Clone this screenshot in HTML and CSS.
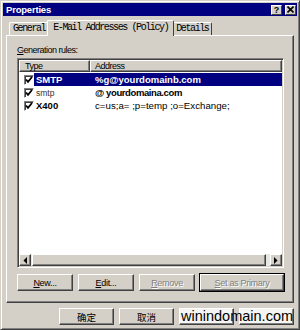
FILE: index.html
```html
<!DOCTYPE html>
<html lang="en">
<head>
    <meta charset="UTF-8">
    <title>Properties</title>

    <link rel="stylesheet" href="styles.css">
</head>
<body>
<div class="window">
    <div class="titlebar">
        <span class="title">Properties</span>
        <span class="capbtn help">?</span>
        <span class="capbtn close">
            <svg width="7" height="7" viewBox="0 0 7 7"><path d="M0.5 0.5 L6.5 6.5 M6.5 0.5 L0.5 6.5" stroke="#000" stroke-width="1.6"/></svg>
        </span>
    </div>

    <div class="tabs">
        <div class="tab">General</div>
        <div class="tab active">E-Mail Addresses (Policy)</div>
        <div class="tab">Details</div>
    </div>

    <div class="panel">
        <div class="label"><u>G</u>eneration rules:</div>
        <div class="list">
            <div class="head">
                <div class="hcell type">Type</div>
                <div class="hcell addr">Address</div>
            </div>
            <div class="rows">
                <div class="row">
                    <span class="check"><svg width="8" height="8" viewBox="0 0 8 8"><path d="M1 3.5 L3 5.8 L7 1" fill="none" stroke="#000" stroke-width="1.8"/></svg></span>
                    <div class="cells sel">
                        <span class="ctype bold">SMTP</span>
                        <span class="caddr bold">%g@yourdomainb.com</span>
                    </div>
                </div>
                <div class="row">
                    <span class="check"><svg width="8" height="8" viewBox="0 0 8 8"><path d="M1 3.5 L3 5.8 L7 1" fill="none" stroke="#000" stroke-width="1.8"/></svg></span>
                    <div class="cells">
                        <span class="ctype small">smtp</span>
                        <span class="caddr bold big">@ yourdomaina.com</span>
                    </div>
                </div>
                <div class="row">
                    <span class="check"><svg width="8" height="8" viewBox="0 0 8 8"><path d="M1 3.5 L3 5.8 L7 1" fill="none" stroke="#000" stroke-width="1.8"/></svg></span>
                    <div class="cells">
                        <span class="ctype bold">X400</span>
                        <span class="caddr plain">c=us;a= ;p=temp ;o=Exchange;</span>
                    </div>
                </div>
            </div>
            <div class="hscroll">
                <span class="sbtn"><svg width="4" height="7" viewBox="0 0 4 7"><polygon points="4,0 4,7 0.5,3.5" fill="#000"/></svg></span>
                <span class="thumb"></span>
                <span class="sbtn"><svg width="4" height="7" viewBox="0 0 4 7"><polygon points="0,0 0,7 3.5,3.5" fill="#000"/></svg></span>
            </div>
        </div>
        <div class="actions">
            <span class="btn"><u>N</u>ew...</span>
            <span class="btn"><u>E</u>dit...</span>
            <span class="btn off"><u>R</u>emove</span>
            <span class="btn off wide"><u>S</u>et as Primary</span>
        </div>
    </div>

    <div class="footer">
        <span class="btn cjk">确定</span>
        <span class="btn cjk">取消</span>
        <span class="btn pale"></span>
        <span class="btn pale"></span>
        <span class="watermark">winindomain.com</span>
    </div>
</div>
</body>
</html>
```

FILE: styles.css
```css
* {box-sizing:border-box}
body {margin:0; font-family:"Liberation Sans", Arial, sans-serif; font-size:9px}
u {text-decoration:underline}

.window {
    width:300px;
    height:330px;
    background:#d4d0c8;
    border:1px solid;
    border-color:#d4d0c8 #404040 #404040 #d4d0c8;
    box-shadow:inset 1px 1px #fff, inset -1px -1px #808080;
    padding:2px;
}

.titlebar {
    height:13px;
    background:#000080;
    display:flex;
    align-items:center;
    padding:0 1px 0 3px;
}
.title {
    color:#fff;
    font-weight:bold;
    font-size:9.5px;
    letter-spacing:-0.2px;
    flex:1;
}
.capbtn {
    width:11px;
    height:10px;
    background:#d4d0c8;
    border:1px solid;
    border-color:#fff #404040 #404040 #fff;
    display:flex;
    align-items:center;
    justify-content:center;
    font-weight:bold;
    font-size:9px;
    line-height:8px;
}
.help {margin-right:3px}

.tabs {
    display:flex;
    align-items:flex-end;
    height:15px;
    margin:4px 0 0 6px;
    position:relative;
    z-index:1;
}
.tab {
    height:13px;
    padding:0 3px;
    border:1px solid;
    border-color:#fff #404040 transparent #fff;
    border-bottom:0;
    border-radius:2px 2px 0 0;
    font-family:"Liberation Mono", monospace;
    font-size:10px;
    letter-spacing:-1.4px;
    line-height:12px;
    background:#d4d0c8;
}
.tab.active {
    height:16px;
    margin:0 -2px -1px;
    padding:0 5px;
    line-height:13px;
    position:relative;
}

.panel {
    margin:0 3px;
    height:268px;
    border:1px solid;
    border-color:#fff #404040 #404040 #fff;
    box-shadow:inset -1px -1px #808080;
    padding:0 0 0 10px;
}
.label {
    margin-top:8px;
    line-height:12px;
    letter-spacing:-0.5px;
}

.list {
    margin-top:2px;
    width:267px;
    height:210px;
    border:1px solid;
    border-color:#808080 #fff #fff #808080;
    box-shadow:inset 1px 1px #404040, inset -1px -1px #d4d0c8;
    padding:1px;
    display:flex;
    flex-direction:column;
    background:#fff;
}
.head {display:flex; height:12px}
.hcell {
    background:#d4d0c8;
    border:1px solid;
    border-color:#fff #404040 #404040 #fff;
    box-shadow:inset -1px -1px #808080;
    line-height:10px;
    letter-spacing:-0.5px;
}
.type {width:71px; padding-left:5px}
.addr {flex:1; padding-left:4px}

.rows {flex:1; padding-top:1px}
.row {display:flex; align-items:center; height:13px}
.check {
    width:10px;
    height:10px;
    margin:0 0 0 5px;
    background:#fff;
    border:1px solid;
    border-color:#808080 #fff #fff #808080;
    box-shadow:inset 1px 1px #404040;
    display:flex;
    align-items:center;
    justify-content:center;
}
.cells {display:flex; flex:1; height:13px; align-items:center}
.sel {background:#000080; color:#fff}
.ctype {width:56px; padding-left:2px}
.caddr {padding-left:5px}
.bold {font-weight:bold; font-size:9.5px}
.big {letter-spacing:-0.4px}
.small {font-size:8.5px; color:#333}
.plain {font-size:9.7px}

.hscroll {display:flex; height:12px; background:#e9e7e3}
.sbtn {
    width:12px;
    background:#d4d0c8;
    border:1px solid;
    border-color:#fff #404040 #404040 #fff;
    box-shadow:inset -1px -1px #808080;
    display:flex;
    align-items:center;
    justify-content:center;
}
.thumb {
    flex:1;
    margin:0 4px 0 1px;
    background:#d4d0c8;
    border:1px solid;
    border-color:#fff #404040 #404040 #fff;
    box-shadow:inset -1px -1px #808080;
}

.actions {display:flex; gap:5px; margin-top:6px}
.btn {
    width:56px;
    height:17px;
    background:#d4d0c8;
    border:1px solid;
    border-color:#fff #404040 #404040 #fff;
    box-shadow:inset -1px -1px #808080;
    display:flex;
    align-items:center;
    justify-content:center;
    letter-spacing:-0.3px;
}
.btn.wide {width:84px; outline:1px solid #000; outline-offset:0}
.btn.off {color:#808080; text-shadow:1px 1px #fff}

.footer {
    display:flex;
    justify-content:flex-end;
    gap:5px;
    margin-top:5px;
    padding-right:3px;
    position:relative;
}
.footer .btn {width:55px}
.cjk {font-family:"Noto Sans CJK SC", sans-serif; font-size:9.5px; letter-spacing:0}
.btn.pale {background:#f4f4f2}
.watermark {
    position:absolute;
    left:178px;
    top:0;
    font-family:"Liberation Sans", Arial, sans-serif;
    font-size:14.5px;
    line-height:16px;
    color:#000;
}
```
